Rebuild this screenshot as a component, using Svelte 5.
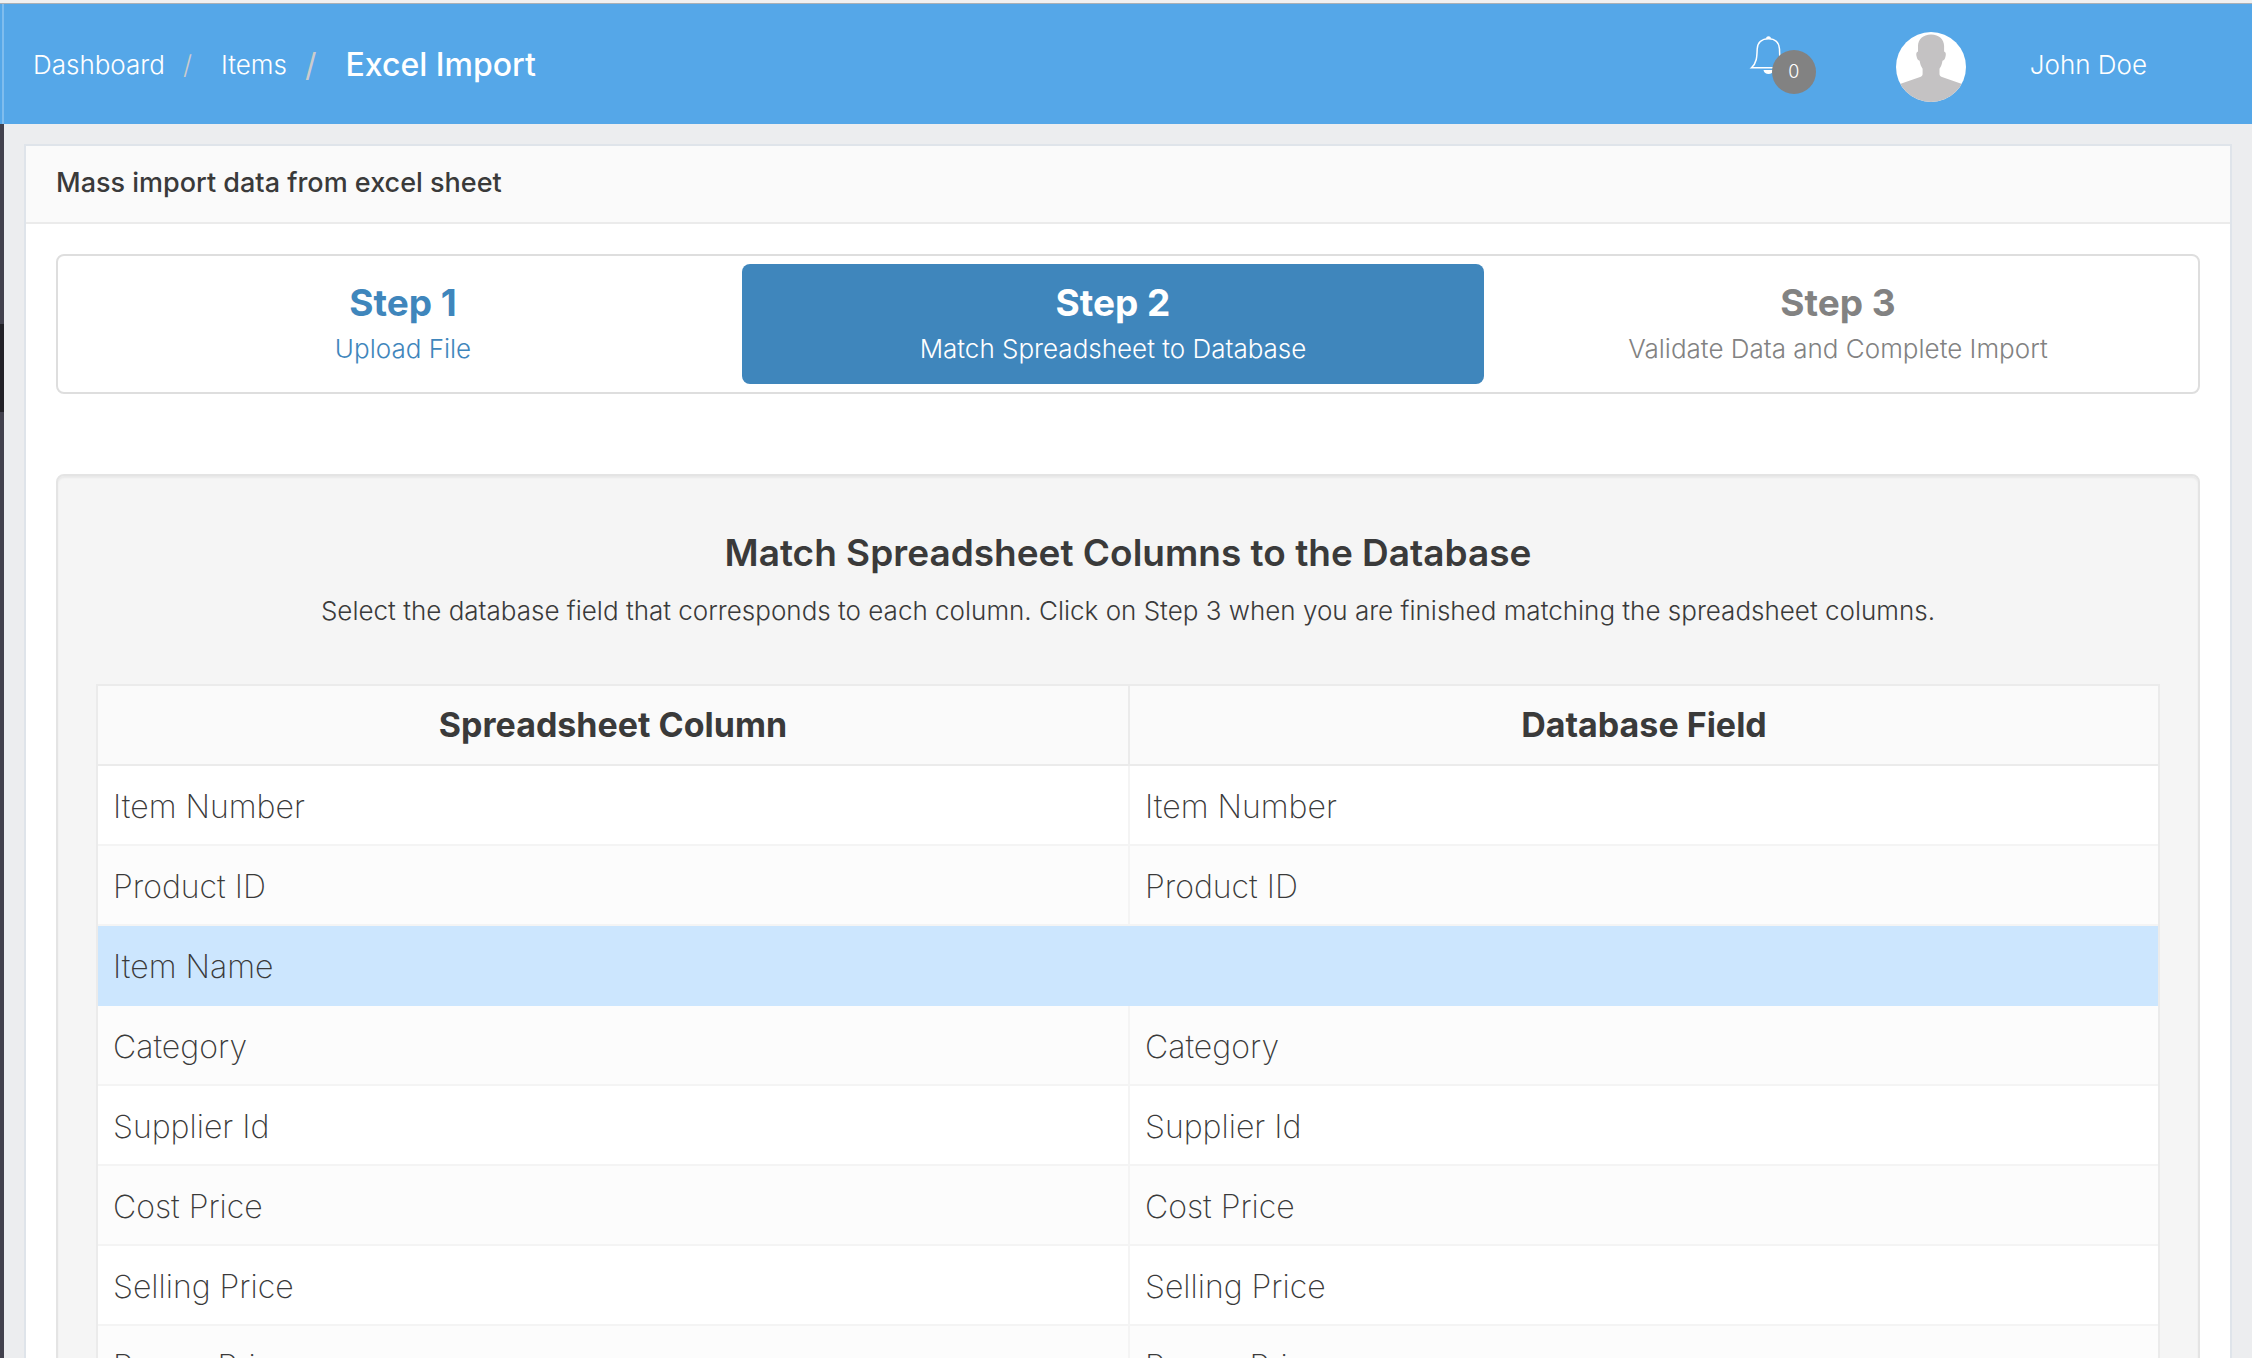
<script lang="ts">
  type Step = { title: string; label: string; state: 'done' | 'active' | 'upcoming' };
  type Match = { column: string; field: string };

  let steps: Step[] = [
    { title: 'Step 1', label: 'Upload File', state: 'done' },
    { title: 'Step 2', label: 'Match Spreadsheet to Database', state: 'active' },
    { title: 'Step 3', label: 'Validate Data and Complete Import', state: 'upcoming' }
  ];

  let matches: Match[] = $state([
    { column: 'Item Number', field: 'Item Number' },
    { column: 'Product ID', field: 'Product ID' },
    { column: 'Item Name', field: '' },
    { column: 'Category', field: 'Category' },
    { column: 'Supplier Id', field: 'Supplier Id' },
    { column: 'Cost Price', field: 'Cost Price' },
    { column: 'Selling Price', field: 'Selling Price' },
    { column: 'Promo Price', field: 'Promo Price' }
  ]);

  let notifications = $state(0);
</script>

<header class="topbar">
  <nav aria-label="Breadcrumb">
    <ol class="breadcrumb">
      <li><a href="#dashboard">Dashboard</a></li>
      <li><a href="#items">Items</a></li>
      <li class="current" aria-current="page">Excel Import</li>
    </ol>
  </nav>

  <div class="user-nav">
    <button class="bell" type="button" aria-label="Notifications">
      <svg width="32" height="40" viewBox="0 0 32 40" aria-hidden="true">
        <path
          d="M18.500 2.700C12 2.700 7.500 6.500 7.200 13c-.3 8-.4 14-5.700 18.700h32C29.500 27 29.800 21 29.500 13c-.3-6.500-4.500-10.300-11-10.300Z"
          fill="none"
          stroke="#fff"
          stroke-width="1.500"
        />
        <path d="M16 2.800a2.500 2.500 0 0 1 5 0Z" fill="#fff" />
        <path d="M13.500 34h10c-.3 2.800-2.500 4-5 4s-4.700-1.200-5-4Z" fill="#fff" />
      </svg>
      <span class="badge">{notifications}</span>
    </button>
    <svg class="avatar" viewBox="0 0 70 70" aria-hidden="true">
      <defs>
        <clipPath id="avatar-clip"><circle cx="35" cy="35" r="35" /></clipPath>
      </defs>
      <g clip-path="url(#avatar-clip)">
        <rect width="70" height="70" fill="#fff" />
        <path
          d="M35 2.500c-8 0-13 5-13 11.500v5.500c-2 .5-2 3-1.400 5 .5 2.500 1.500 4 3 4.200.5 3.300 1.500 5.800 3 8V42c0 1.500-.8 2.200-2.500 3L4 52v18h62V52L46 45c-1.700-.8-2.500-1.500-2.500-3v-5.300c1.500-2.200 2.500-4.700 3-8 1.500-.2 2.500-1.700 3-4.200.6-2 .6-4.500-1.400-5V14c0-6.500-5-11.500-13-11.500Z"
          fill="#c4c2c3"
        />
      </g>
    </svg>
    <a class="user-name" href="#profile">John Doe</a>
  </div>
</header>

<div class="shell">
  <aside class="sidebar"><div class="sidebar-active"></div></aside>

  <main class="content">
    <section class="panel">
      <h1 class="panel-title">Mass import data from excel sheet</h1>

      <div class="panel-body">
        <nav class="steps" aria-label="Import steps">
          {#each steps as step}
            <a class="step {step.state}" href="#{step.title.toLowerCase().replace(' ', '-')}">
              <strong>{step.title}</strong>
              <span>{step.label}</span>
            </a>
          {/each}
        </nav>

        <div class="well">
          <h2>Match Spreadsheet Columns to the Database</h2>
          <p>
            Select the database field that corresponds to each column. Click on Step 3 when you are finished matching the
            spreadsheet columns.
          </p>

          <table>
            <thead>
              <tr>
                <th scope="col">Spreadsheet Column</th>
                <th scope="col">Database Field</th>
              </tr>
            </thead>
            <tbody>
              {#each matches as match}
                <tr class:unmatched={!match.field}>
                  <td>{match.column}</td>
                  <td>{match.field}</td>
                </tr>
              {/each}
            </tbody>
          </table>
        </div>
      </div>
    </section>
  </main>
</div>

<style>
  :global(body) {
    background: #ecedef;
    color: #3a3a3a;
    font-family: Inter, "Liberation Sans", sans-serif;
    font-size: 26px;
    font-weight: 300;
    line-height: 40px;
  }

  a {
    color: inherit;
    text-decoration: none;
  }

  .topbar {
    display: flex;
    justify-content: space-between;
    align-items: center;
    box-sizing: border-box;
    height: 124px;
    padding: 3px 105px 0 28px;
    border-top: 3px solid #f0f0f0;
    background: linear-gradient(90deg, #55a7e8 2px, #80bdee 2px, #80bdee 4px, #55a7e8 4px);
    box-shadow: inset 0 1px #aab0b6;
    color: #fff;
  }

  .breadcrumb {
    display: flex;
    align-items: center;
    margin: 0;
    padding: 0 0 0 5px;
    list-style: none;
  }

  .breadcrumb li + li::before {
    content: "/";
    padding: 0 29px 0 18px;
    color: #ccc;
  }

  .breadcrumb .current {
    font-size: 32px;
    font-weight: 500;
  }

  .breadcrumb .current::before {
    font-weight: 400;
  }

  .user-nav {
    display: flex;
    align-items: center;
  }

  .bell {
    position: relative;
    width: 66px;
    height: 58px;
    padding: 0;
    border: 0;
    background: none;
    color: #fff;
    font: inherit;
    text-align: left;
  }

  .bell svg {
    display: block;
    height: 40px;
    margin-bottom: 18px;
    overflow: visible;
  }

  .badge {
    position: absolute;
    right: 0;
    bottom: 0;
    width: 44px;
    height: 44px;
    border-radius: 50%;
    background: #828282;
    font-size: 18px;
    line-height: 44px;
    text-align: center;
  }

  .avatar {
    width: 70px;
    height: 70px;
    margin: 4px 64px 0 80px;
  }

  .shell {
    display: flex;
  }

  .sidebar {
    flex: none;
    width: 4px;
    padding-top: 200px;
    background: #42414d;
  }

  .sidebar-active {
    height: 88px;
    background: #222127;
  }

  .content {
    flex: 1;
    min-width: 0;
    padding: 20px;
  }

  .panel {
    border: 2px solid #dfe4ea;
    background: #fff;
  }

  .panel-title {
    margin: 0;
    padding: 17px 30px 19px;
    border-bottom: 2px solid #ebebeb;
    background: #fafafa;
    font-size: 27px;
    font-weight: 500;
    line-height: 40px;
  }

  .panel-body {
    padding: 30px;
  }

  .steps {
    display: grid;
    grid-template-columns: 674fr 742fr 704fr;
    gap: 2px;
    margin-bottom: 80px;
    padding: 8px;
    border: 2px solid #dedede;
    border-radius: 8px;
  }

  .step {
    display: flex;
    flex-direction: column;
    padding: 14px 30px;
    border-radius: 8px;
    text-align: center;
  }

  .step strong {
    font-size: 37px;
    font-weight: 700;
    line-height: 50px;
  }

  .step span {
    line-height: 42px;
  }

  .step.done {
    color: #3f86bc;
  }

  .step.active {
    background: #3f86bc;
    color: #fff;
  }

  .step.upcoming {
    color: #828282;
  }

  .well {
    padding: 52px 38px 38px;
    border: 2px solid #e4e4e4;
    border-radius: 8px;
    background: #f5f5f5;
    box-shadow: inset 0 2px 2px rgba(0, 0, 0, 0.05);
    text-align: center;
  }

  .well h2 {
    margin: 0 0 13px;
    font-size: 37px;
    font-weight: 600;
    line-height: 50px;
  }

  .well p {
    margin: 0 0 53px;
  }

  table {
    width: 100%;
    table-layout: fixed;
    border: 2px solid #ebebeb;
    border-spacing: 0;
    background: #fff;
    line-height: 46px;
  }

  th {
    padding: 16px;
    border-bottom: 2px solid #ebebeb;
    background: #fafafa;
    font-size: 34px;
    font-weight: 700;
  }

  td {
    height: 46px;
    padding: 18px 15px 14px;
    border-bottom: 2px solid #f4f4f4;
    font-size: 32px;
    font-weight: 200;
    text-align: left;
  }

  th + th {
    border-left: 2px solid #ebebeb;
  }

  td + td {
    border-left: 2px solid #f4f4f4;
  }

  tbody tr:nth-child(even) td {
    background: #fcfcfc;
  }

  tbody tr.unmatched td {
    border-color: #cce6fe;
    background: #cce6fe;
  }
</style>
